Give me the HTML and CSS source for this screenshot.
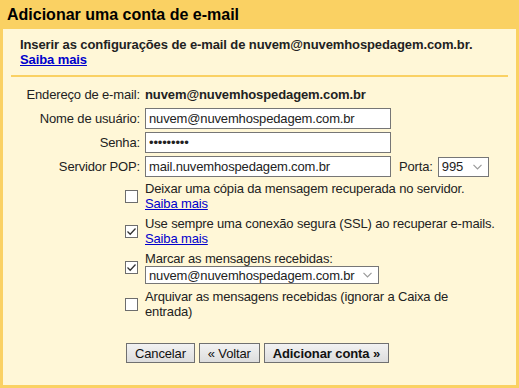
FILE: index.html
```html
<!DOCTYPE html>
<html>
<head>
    <title>Adicionar uma conta de e-mail</title>
    <link rel="stylesheet" href="styles.css">
</head>
<body>
    <div class="title">Adicionar uma conta de e-mail</div>
    <div class="panel">
        <div class="intro">
            <b>Inserir as configurações de e-mail de nuvem@nuvemhospedagem.com.br.</b><br>
            <a href="#" class="strong-link">Saiba mais</a>
        </div>
        <div class="rule"></div>

        <form class="fields">
            <div class="lbl">Endereço de e-mail:</div>
            <div class="val strong">nuvem@nuvemhospedagem.com.br</div>

            <label class="lbl" for="user">Nome de usuário:</label>
            <div class="val"><input type="text" id="user" class="txt" value="nuvem@nuvemhospedagem.com.br"></div>

            <label class="lbl" for="pass">Senha:</label>
            <div class="val"><input type="password" id="pass" class="txt" value="123456789"></div>

            <label class="lbl" for="pop">Servidor POP:</label>
            <div class="val">
                <input type="text" id="pop" class="txt" value="mail.nuvemhospedagem.com.br">
                <span class="porta">Porta:</span>
                <div class="select port">
                    <span>995</span>
                    <svg width="9" height="6" viewBox="0 0 9 6"><path d="M0.5 0.8 L4.5 4.8 L8.5 0.8" fill="none" stroke="#9a9a9a" stroke-width="1.2"/></svg>
                </div>
            </div>

            <!-- opções -->
            <div class="lbl"><span class="cb"></span></div>
            <div class="val opt">Deixar uma cópia da mensagem recuperada no servidor.<br><a href="#">Saiba mais</a></div>

            <div class="lbl"><span class="cb"><svg width="11" height="11" viewBox="0 0 11 11"><path d="M1.5 5.5 L4.2 8.2 L9.5 2.5" fill="none" stroke="#333" stroke-width="1.3"/></svg></span></div>
            <div class="val opt">Use sempre uma conexão segura (SSL) ao recuperar e-mails.<br><a href="#">Saiba mais</a></div>

            <div class="lbl"><span class="cb"><svg width="11" height="11" viewBox="0 0 11 11"><path d="M1.5 5.5 L4.2 8.2 L9.5 2.5" fill="none" stroke="#333" stroke-width="1.3"/></svg></span></div>
            <div class="val opt">
                Marcar as mensagens recebidas:
                <div class="select label-sel">
                    <span>nuvem@nuvemhospedagem.com.br</span>
                    <svg width="9" height="6" viewBox="0 0 9 6"><path d="M0.5 0.8 L4.5 4.8 L8.5 0.8" fill="none" stroke="#9a9a9a" stroke-width="1.2"/></svg>
                </div>
            </div>

            <div class="lbl"><span class="cb"></span></div>
            <div class="val opt">Arquivar as mensagens recebidas (ignorar a Caixa de entrada)</div>
        </form>

        <div class="buttons">
            <button type="button">Cancelar</button>
            <button type="button">« Voltar</button>
            <button type="button" class="main">Adicionar conta »</button>
        </div>
    </div>
</body>
</html>
```

FILE: styles.css
```css
body { margin: 0; background: #fad163; font-family: "Liberation Sans", Arial, sans-serif; font-size: 13px; letter-spacing: -0.15px; color: #222; }
.title { height: 29px; line-height: 29px; padding-left: 7px; font-size: 16px; font-weight: bold; color: #000; letter-spacing: 0; }
.panel { margin: 0 3px 3px; height: 356px; background: #fff7d7; }
.intro { padding: 8px 17px 0; line-height: 15px; }
.intro b { letter-spacing: -0.1px; }
a { color: #0000cc; }
.strong-link { font-weight: bold; letter-spacing: -0.1px; }
.rule { height: 2px; background: #fad163; margin: 8px 8px 0; }

.fields { display: grid; grid-template-columns: 137px 352px; column-gap: 5px; row-gap: 3px; margin-top: 7px; line-height: 15px; }
.lbl { text-align: right; display: flex; align-items: center; justify-content: flex-end; height: 21px; }
.val { display: flex; align-items: center; height: 21px; }
.strong { font-weight: bold; letter-spacing: -0.1px; }
.txt { width: 246px; height: 21px; box-sizing: border-box; border: 1px solid #767676; padding: 0 3px; font: 13px "Liberation Sans", Arial, sans-serif; letter-spacing: -0.15px; color: #222; background: #fff; margin: 0; outline: none; }
.porta { margin-left: 8px; margin-right: 5px; }

.select { display: flex; align-items: center; justify-content: space-between; box-sizing: border-box; border: 1px solid #767676; background: #fff; padding: 0 6px 0 3px; }
.port { width: 51px; height: 20px; }
.label-sel { width: 234px; height: 18px; }

.fields .lbl:has(.cb) { height: auto; }
.cb { width: 13px; height: 13px; box-sizing: border-box; border: 1px solid #6d6d6d; background: #fff; margin-right: 2px; display: flex; align-items: center; justify-content: center; }
.opt { display: block; height: auto; padding: 1px 0; }

.buttons { margin-top: 23px; padding-left: 123px; display: flex; gap: 4px; }
button { height: 20px; padding: 0 8px; font: 13px "Liberation Sans", Arial, sans-serif; letter-spacing: -0.15px; color: #111; border: 1px solid #707070; background: linear-gradient(#f2f2f2, #dddddd); }
button.main { font-weight: bold; letter-spacing: -0.1px; }
```
